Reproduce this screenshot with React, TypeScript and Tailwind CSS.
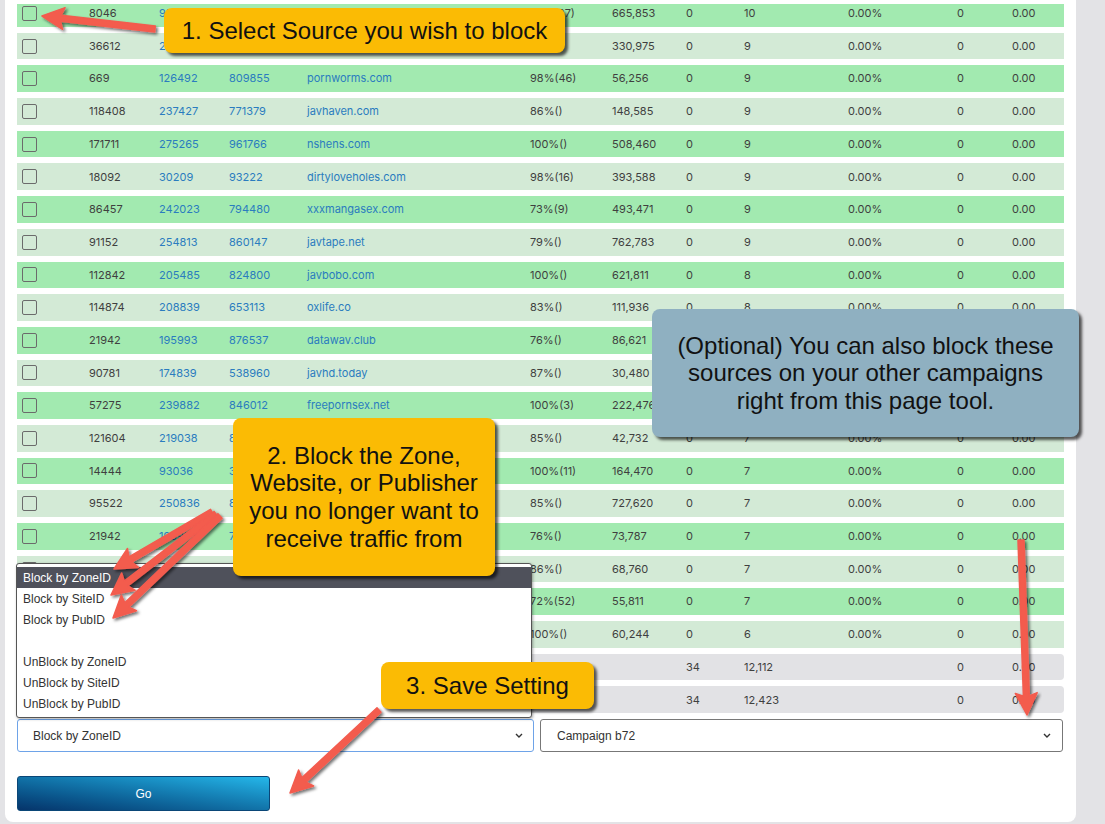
import React from 'react';

type Row = [string, string, string, string, string, string, string, string];

const rows: Row[] = [
  ['8046', '95614', '318207', 'hentaifox.tv', '87%(37)', '665,853', '0', '10'],
  ['36612', '231548', '702194', 'camwhores.rip', '91%()', '330,975', '0', '9'],
  ['669', '126492', '809855', 'pornworms.com', '98%(46)', '56,256', '0', '9'],
  ['118408', '237427', '771379', 'javhaven.com', '86%()', '148,585', '0', '9'],
  ['171711', '275265', '961766', 'nshens.com', '100%()', '508,460', '0', '9'],
  ['18092', '30209', '93222', 'dirtyloveholes.com', '98%(16)', '393,588', '0', '9'],
  ['86457', '242023', '794480', 'xxxmangasex.com', '73%(9)', '493,471', '0', '9'],
  ['91152', '254813', '860147', 'javtape.net', '79%()', '762,783', '0', '9'],
  ['112842', '205485', '824800', 'javbobo.com', '100%()', '621,811', '0', '8'],
  ['114874', '208839', '653113', 'oxlife.co', '83%()', '111,936', '0', '8'],
  ['21942', '195993', '876537', 'datawav.club', '76%()', '86,621', '0', '8'],
  ['90781', '174839', '538960', 'javhd.today', '87%()', '30,480', '0', '8'],
  ['57275', '239882', '846012', 'freepornsex.net', '100%(3)', '222,476', '0', '8'],
  ['121604', '219038', '812377', 'hqporner.com', '85%()', '42,732', '0', '7'],
  ['14444', '93036', '345120', 'eporner.com', '100%(11)', '164,470', '0', '7'],
  ['95522', '250836', '871904', 'tnaflix.com', '85%()', '727,620', '0', '7'],
  ['21942', '195993', '763012', 'datawav.club', '76%()', '73,787', '0', '7'],
  ['88210', '201457', '690331', 'youjizz.com', '86%()', '68,760', '0', '7'],
  ['55418', '219640', '728815', 'porndig.com', '72%(52)', '55,811', '0', '7'],
  ['30127', '188205', '617744', 'pornone.com', '100%()', '60,244', '0', '6'],
];

const totals = [
  ['34', '12,112'],
  ['34', '12,423'],
];

// cells that sit fully under a callout or the open menu, left blank
function covered(i: number, c: number) {
  if (i === 0) return c === 2 || c === 3;
  if (i === 1) return c >= 2 && c <= 4;
  if (i >= 10 && i <= 12) return c >= 6;
  if (i >= 13 && i <= 16) return c === 3;
  if (i >= 17) return c <= 3;
  return false;
}

const grid =
  'grid grid-cols-[72px_70px_70px_78px_223px_82px_74px_58px_104px_109px_55px_1fr] items-center';

function Chevron() {
  return (
    <svg width="8" height="5" viewBox="0 0 8 5" className="shrink-0">
      <polyline points="1,1 4,4 7,1" fill="none" stroke="#333" strokeWidth="1.4" />
    </svg>
  );
}

// polygon for a fat arrow from tail to tip
function arrowPoints(x1: number, y1: number, x2: number, y2: number, w = 6, hl = 19, hw = 22) {
  const dx = x2 - x1;
  const dy = y2 - y1;
  const len = Math.hypot(dx, dy);
  const ux = dx / len;
  const uy = dy / len;
  const px = -uy;
  const py = ux;
  const bx = x2 - ux * hl;
  const by = y2 - uy * hl;
  const pts = [
    [x1 + (px * w) / 2, y1 + (py * w) / 2],
    [bx + (px * w) / 2, by + (py * w) / 2],
    [bx - ux * 3 + (px * hw) / 2, by - uy * 3 + (py * hw) / 2],
    [x2, y2],
    [bx - ux * 3 - (px * hw) / 2, by - uy * 3 - (py * hw) / 2],
    [bx - (px * w) / 2, by - (py * w) / 2],
    [x1 - (px * w) / 2, y1 - (py * w) / 2],
  ];
  return pts.map((p) => p.map((n) => n.toFixed(1)).join(',')).join(' ');
}

const arrows: [number, number, number, number][] = [
  [155, 29, 42, 16],
  [212, 512, 114, 569],
  [216, 514, 111, 595],
  [220, 516, 113, 618],
  [379, 710, 290, 793],
  [1021, 540, 1027, 715],
];

export default function App() {
  return (
    <div className="relative h-[824px] w-[1105px] overflow-hidden bg-[#e3e3e6] font-['Inter',sans-serif]">
      <div className="ml-[5px] h-[822px] w-[1071px] rounded-b-[8px] bg-white px-[12px]">
        <div className="flex flex-col gap-[6px] text-[11px] text-[#3f3f3f]">
          {rows.map((r, i) => {
            const cells = [...r, '0.00%', '0', '0.00'];
            return (
              <div
                key={i}
                className={`${grid} h-[26.7px] ${i % 2 === 0 ? 'bg-[#a2eab0]' : 'bg-[#d3ead6]'} ${
                  i === 0 ? 'shadow-[inset_0_4px_0_#fff]' : ''
                }`}
              >
                <div className="pl-[5px]">
                  <div className="h-[15px] w-[15px] rounded-[2px] border border-[#6b6b6b]" />
                </div>
                {cells.map((v, c) => (
                  <div key={c} className={c >= 1 && c <= 3 ? 'text-[#2a7cbf]' : ''}>
                    {covered(i, c) ? '' : v}
                  </div>
                ))}
              </div>
            );
          })}
          {totals.map((t, i) => (
            <div key={'t' + i} className={`${grid} h-[26.7px] rounded-[4px] bg-[#e2e2e5]`}>
              <div />
              <div />
              <div />
              <div />
              <div />
              <div />
              <div />
              <div>{t[0]}</div>
              <div>{t[1]}</div>
              <div />
              <div>0</div>
              <div>0.00</div>
            </div>
          ))}
        </div>

        <div className="relative mt-[6px] flex gap-[6px] font-['Liberation_Sans',Arial,sans-serif] text-[12px] text-[#333]">
          <div className="absolute bottom-full left-[-1px] mb-[1px] w-[516px] rounded-[3px] border border-[#555] bg-white pt-[3px] pb-[3px] shadow-[1px_1px_3px_rgba(0,0,0,0.35)]">
            <div className="flex h-[21px] items-center bg-[#4f515b] pl-[6px] text-white">Block by ZoneID</div>
            <div className="flex h-[21px] items-center pl-[6px]">Block by SiteID</div>
            <div className="flex h-[21px] items-center pl-[6px]">Block by PubID</div>
            <div className="h-[21px]" />
            <div className="flex h-[21px] items-center pl-[6px]">UnBlock by ZoneID</div>
            <div className="flex h-[21px] items-center pl-[6px]">UnBlock by SiteID</div>
            <div className="flex h-[21px] items-center pl-[6px]">UnBlock by PubID</div>
          </div>
          <div className="flex h-[33px] w-[517px] items-center justify-between rounded-[3px] border border-[#6ea3e8] pl-[15px] pr-[10px]">
            <span>Block by ZoneID</span>
            <Chevron />
          </div>
          <div className="flex h-[33px] w-[523px] items-center justify-between rounded-[3px] border border-[#777] pl-[16px] pr-[11px]">
            <span>Campaign b72</span>
            <Chevron />
          </div>
        </div>

        <button className="mt-[24px] flex h-[35px] w-[253px] items-center justify-center rounded-[3px] border border-[#0a4677] bg-gradient-to-tr from-[#06346a] to-[#25b7ea] font-['Liberation_Sans',Arial,sans-serif] text-[12px] text-white">
          Go
        </button>
      </div>

      <div className="font-['Liberation_Sans',Arial,sans-serif] text-[24px] leading-[27.6px] text-[#111]">
        <div className="absolute left-[164px] top-[8px] flex h-[45px] w-[401px] items-center justify-center rounded-[8px] bg-[#fbbb04] shadow-[3px_3px_3px_rgba(0,0,0,0.65)]">
          1. Select Source you wish to block
        </div>
        <div className="absolute left-[233px] top-[418px] flex h-[158px] w-[262px] items-center justify-center rounded-[8px] bg-[#fbbb04] text-center shadow-[3px_3px_3px_rgba(0,0,0,0.65)]">
          2. Block the Zone,
          <br />
          Website, or Publisher
          <br />
          you no longer want to
          <br />
          receive traffic from
        </div>
        <div className="absolute left-[381px] top-[662px] flex h-[47px] w-[213px] items-center justify-center rounded-[8px] bg-[#fbbb04] shadow-[3px_3px_3px_rgba(0,0,0,0.65)]">
          3. Save Setting
        </div>
        <div className="absolute left-[652px] top-[309px] flex h-[128px] w-[427px] items-center justify-center rounded-[8px] bg-[#8fb0c1] text-center shadow-[3px_3px_3px_rgba(0,0,0,0.65)]">
          (Optional) You can also block these
          <br />
          sources on your other campaigns
          <br />
          right from this page tool.
        </div>
      </div>

      <svg className="pointer-events-none absolute left-0 top-0" width="1105" height="824">
        <defs>
          <filter id="sh" x="-20%" y="-20%" width="140%" height="140%">
            <feDropShadow dx="2" dy="2" stdDeviation="1.5" floodColor="#000" floodOpacity="0.55" />
          </filter>
        </defs>
        {arrows.map((a, i) => (
          <polygon
            key={i}
            points={arrowPoints(a[0], a[1], a[2], a[3])}
            fill="#f35b4e"
            stroke="#f35b4e"
            strokeWidth="1.5"
            strokeLinejoin="round"
            filter="url(#sh)"
          />
        ))}
      </svg>
    </div>
  );
}
